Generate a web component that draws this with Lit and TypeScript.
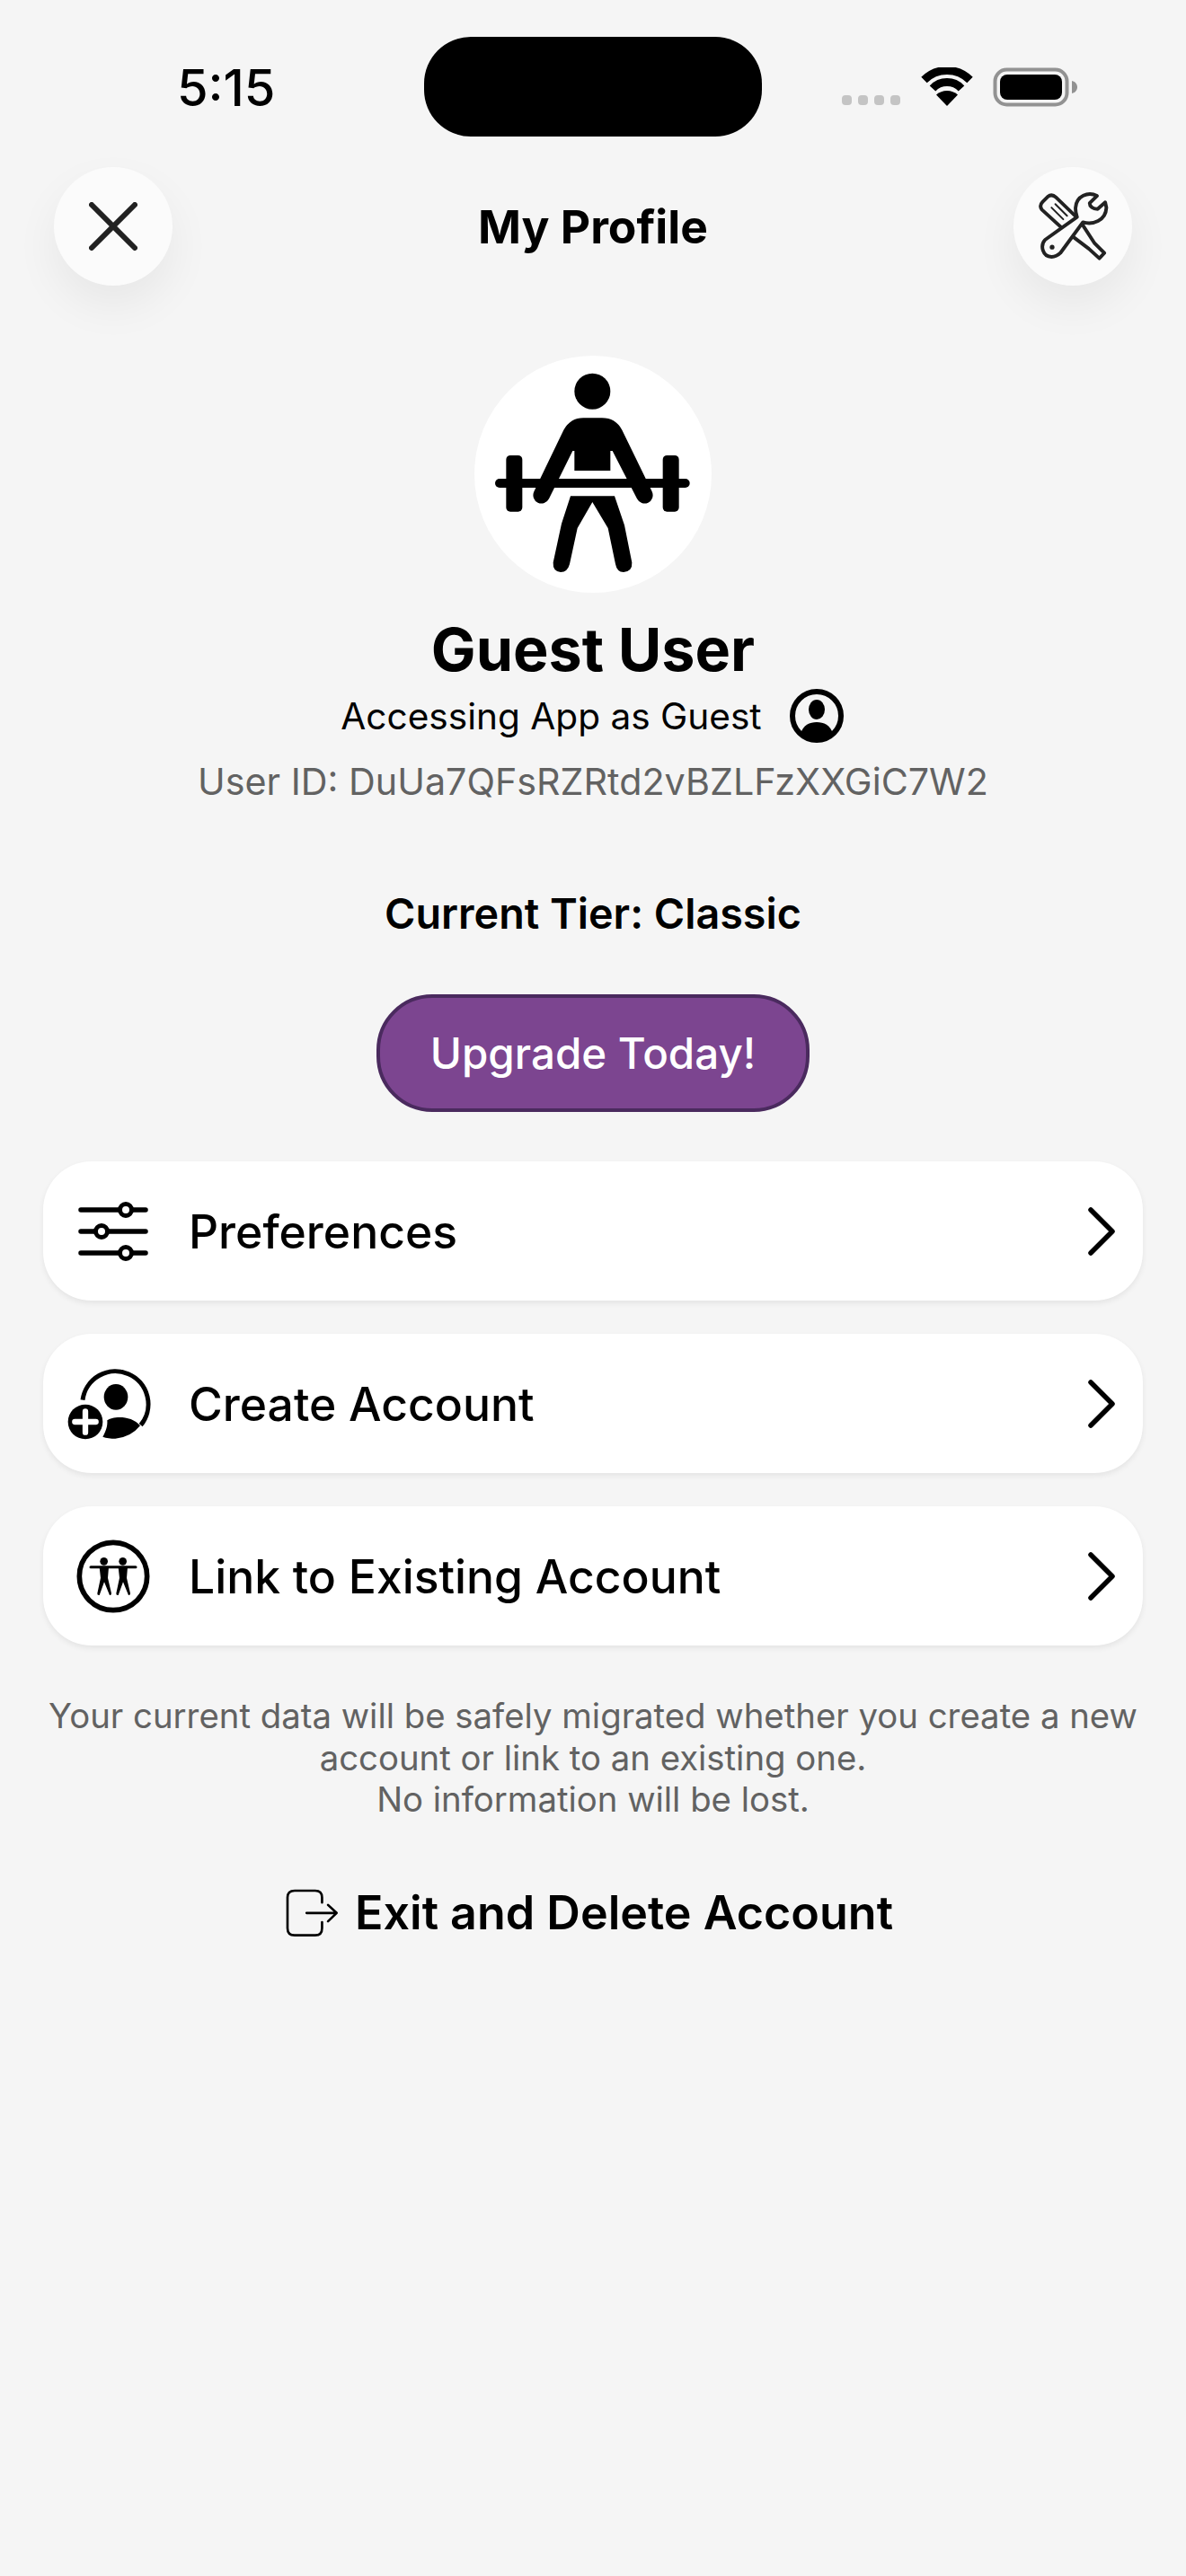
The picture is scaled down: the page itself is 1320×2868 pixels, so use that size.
import { LitElement, html, css, svg } from 'lit'
import { customElement } from 'lit/decorators.js'

const chevron = html`<svg class="chev" viewBox="0 0 36 56" fill="none" stroke="#000" stroke-width="5.5" stroke-linecap="round" stroke-linejoin="round">
  <path d="M6 4 L30 28 L6 52" />
</svg>`

const sliders = html`<svg class="row-ico" viewBox="0 0 100 100">
  <g stroke="#000" stroke-width="5.5" stroke-linecap="round" fill="none">
    <path d="M14 26 H86 M14 50 H86 M14 74 H86" />
  </g>
  <g fill="#fff" stroke="#000" stroke-width="5">
    <circle cx="64" cy="26" r="6.5" />
    <circle cx="37" cy="50" r="6.5" />
    <circle cx="64" cy="74" r="6.5" />
  </g>
</svg>`

const personAdd = html`<svg class="row-ico" viewBox="48 35 300 300">
  <path d="M96 172 A110 110 0 1 1 290 256" fill="none" stroke="#000" stroke-width="15" />
  <ellipse cx="207" cy="162" rx="40" ry="43" />
  <path d="M178 240 C195 226 260 222 288 258 A117 117 0 0 1 205 301 C190 301 175 299 163 295 C172 280 180 260 178 240Z" />
  <circle cx="105" cy="245" r="58" />
  <path d="M70 245 H140 M105 210 V280" stroke="#fff" stroke-width="19" stroke-linecap="round" />
</svg>`

const figure = (dx: number) => svg`<g transform="translate(${dx} 0)">
  <circle cx="136" cy="117" r="13" />
  <path d="M121 136 H152 L149 172 L161 224 Q161 231 155 230 L137 186 L121 230 Q113 231 114 224 L125 172 Z" />
</g>`

const people = html`<svg class="row-ico" viewBox="17 17 300 300">
  <circle cx="167" cy="167" r="113" fill="none" stroke="#000" stroke-width="17" />
  ${figure(0)}${figure(63)}
  <path d="M92 136 L242 136" stroke="#000" stroke-width="9" stroke-linecap="round" />
</svg>`

const exitIcon = html`<svg class="exit-ico" viewBox="110 60 190 175" fill="none" stroke="#000" stroke-width="8" stroke-linecap="round" stroke-linejoin="round">
  <path d="M238 112 V95 Q238 72 215 72 H146 Q122 72 122 95 V198 Q122 222 146 222 H215 Q238 222 238 198 V178" />
  <path d="M186 147 H286 M258 120 L287 147 L258 175" />
</svg>`

const tools = html`<svg class="tools" viewBox="155 138 245 235" fill="none" stroke="#222" stroke-width="12" stroke-linejoin="round" stroke-linecap="round">
  <path d="M172 197 Q162 183 175 170 L192 153 Q206 142 220 155 L300 232 L352 312 L385 345 L368 363 L332 330 L250 268 Z" />
  <path d="M205 190 L245 230 M218 178 L258 218" stroke-width="6" />
  <path fill="#fbfbfb" d="M360 150 C330 135 290 150 287 190 C286 205 290 215 292 222 L183 300 C165 320 175 358 205 358 C220 358 228 352 235 345 L312 240 C345 250 390 235 392 190 L388 172 L362 195 C345 195 335 185 335 175 Z" />
  <circle cx="207" cy="325" r="8" fill="#222" stroke="none" />
</svg>`

const lifter = html`<svg class="lifter" viewBox="24 24 792 792">
  <circle cx="418" cy="143" r="60" />
  <path d="M388 232 H450 Q495 232 517 272 L617 478 A27 27 0 0 1 567 502 L485 342 L478 342 V408 H358 V342 L352 342 L273 502 A27 27 0 0 1 223 478 L322 272 Q345 232 388 232 Z" />
  <rect x="93" y="435" width="650" height="30" rx="15" />
  <rect x="130" y="357" width="54" height="188" rx="14" />
  <rect x="653" y="357" width="54" height="188" rx="14" />
  <path d="M345 493 H492 L525 590 L550 715 Q552 745 522 747 Q500 747 495 720 L470 600 L418 513 L368 600 L342 720 Q335 747 312 747 Q285 745 287 715 L315 585 Z" />
</svg>`

@customElement('app-root')
export class AppRoot extends LitElement {
  static styles = css`
    :host {
      display: block;
      width: 1320px;
      height: 2868px;
      background: #f5f5f5;
      color: #000;
      font-family: Inter, 'Liberation Sans', sans-serif;
      overflow: hidden;
    }
    .status {
      height: 186px;
      display: grid;
      grid-template-columns: 472px 376px 1fr;
      box-sizing: border-box;
      padding-top: 41px;
    }
    .time {
      font-size: 56px;
      font-weight: 500;
      line-height: 115px;
      height: 111px;
      padding-left: 197px;
    }
    .island {
      height: 111px;
      background: #000;
      border-radius: 52px;
    }
    .sys {
      height: 111px;
      display: flex;
      align-items: flex-start;
      padding: 34px 0 0 89px;
    }
    .dots {
      display: flex;
      gap: 7px;
      margin-top: 31px;
    }
    .dots i {
      width: 11px;
      height: 11px;
      background: #c4c4c4;
      border-radius: 4px;
    }
    .wifi {
      width: 58px;
      height: 43px;
      margin-left: 23px;
    }
    .battery {
      width: 94px;
      height: 44px;
      margin-left: 22px;
    }
    .head {
      display: flex;
      justify-content: space-between;
      align-items: center;
      padding: 0 60px;
      height: 132px;
    }
    .fab {
      width: 132px;
      height: 132px;
      border-radius: 50%;
      background: #fbfbfb;
      box-shadow: 0 22px 50px rgba(0, 0, 0, 0.06);
      display: flex;
      align-items: center;
      justify-content: center;
    }
    .x {
      width: 54px;
      height: 54px;
    }
    .tools {
      width: 80px;
      height: 77px;
    }
    .title {
      font-size: 51.5px;
      font-weight: 700;
      line-height: 60px;
    }
    .profile {
      display: flex;
      flex-direction: column;
      align-items: center;
    }
    .avatar {
      width: 264px;
      height: 264px;
      margin-top: 78px;
      border-radius: 50%;
      background: #fff;
    }
    .lifter {
      display: block;
      width: 264px;
      height: 264px;
    }
    .name {
      margin-top: 27px;
      font-size: 66.4px;
      font-weight: 700;
      line-height: 72px;
    }
    .guest {
      margin-top: 8px;
      display: flex;
      align-items: center;
      height: 60px;
      gap: 31px;
      font-size: 40.6px;
      font-weight: 400;
      padding-right: 2px;
    }
    .guest svg {
      width: 60px;
      height: 60px;
    }
    .uid {
      margin-top: 19px;
      font-size: 41.25px;
      line-height: 48px;
      color: #626262;
    }
    .tier {
      margin-top: 99px;
      font-size: 46.7px;
      font-weight: 600;
      line-height: 48px;
    }
    .upgrade {
      margin-top: 66px;
      box-sizing: border-box;
      width: 482px;
      height: 131px;
      border-radius: 62px;
      background: #7c4590;
      border: 4px solid #4a2a5e;
      color: #fff;
      font-size: 47.5px;
      font-weight: 500;
      display: flex;
      align-items: center;
      justify-content: center;
    }
    .rows {
      margin: 55px 48px 0;
      display: flex;
      flex-direction: column;
      gap: 37px;
    }
    .row {
      height: 155px;
      background: #fff;
      border-radius: 54px;
      box-shadow: 0 3px 6px rgba(0, 0, 0, 0.07);
      display: flex;
      align-items: center;
      padding: 0 28px 0 28px;
      font-size: 51.6px;
      font-weight: 500;
    }
    .row-ico {
      width: 100px;
      height: 100px;
      margin-right: 34px;
      flex: none;
      overflow: visible;
    }
    .row span {
      flex: 1;
    }
    .chev {
      width: 36px;
      height: 56px;
    }
    .note {
      margin: 55px 40px 0;
      text-align: center;
      font-size: 38.35px;
      line-height: 46.5px;
      color: #626262;
    }
    .exit {
      margin-top: 71px;
      display: flex;
      align-items: center;
      justify-content: center;
      gap: 16px;
      font-size: 52px;
      font-weight: 600;
      height: 64px;
      padding-right: 10px;
    }
    .exit-ico {
      width: 63px;
      height: 58px;
    }
  `

  render() {
    return html`
      <div class="status">
        <div class="time">5:15</div>
        <div class="island"></div>
        <div class="sys">
          <div class="dots"><i></i><i></i><i></i><i></i></div>
          <svg class="wifi" viewBox="0 0 58 43" fill="none" stroke="#000" stroke-width="9">
            <path d="M3.5 14 A36 36 0 0 1 54.5 14" />
            <path d="M13 23.5 A22 22 0 0 1 45 23.5" />
            <path d="M17 30.5 A18 18 0 0 1 41 30.5 L29 43 Z" fill="#000" stroke="none" />
          </svg>
          <svg class="battery" viewBox="0 0 94 44">
            <rect x="2.5" y="2.5" width="80" height="39" rx="13" fill="none" stroke="#929292" stroke-width="4" />
            <rect x="8" y="8" width="69" height="28" rx="8" />
            <path d="M88 15 C92 16 94 19 94 22 C94 25 92 28 88 29 Z" fill="#929292" />
          </svg>
        </div>
      </div>

      <div class="head">
        <div class="fab">
          <svg class="x" viewBox="0 0 54 54" stroke="#222" stroke-width="6" stroke-linecap="round">
            <path d="M3 3 L51 51 M51 3 L3 51" />
          </svg>
        </div>
        <div class="title">My Profile</div>
        <div class="fab">${tools}</div>
      </div>

      <div class="profile">
        <div class="avatar">${lifter}</div>
        <div class="name">Guest User</div>
        <div class="guest">
          Accessing App as Guest
          <svg viewBox="0 0 60 60">
            <circle cx="30" cy="30" r="27" fill="none" stroke="#000" stroke-width="6" />
            <ellipse cx="30" cy="23" rx="9" ry="11" />
            <path d="M12 50 C15 40 22 37 30 37 C38 37 45 40 48 50 C43 56 36 58 30 58 C24 58 17 56 12 50 Z" />
          </svg>
        </div>
        <div class="uid">User ID: DuUa7QFsRZRtd2vBZLFzXXGiC7W2</div>
        <div class="tier">Current Tier: Classic</div>
        <div class="upgrade">Upgrade Today!</div>
      </div>

      <div class="rows">
        <div class="row">${sliders}<span>Preferences</span>${chevron}</div>
        <div class="row">${personAdd}<span>Create Account</span>${chevron}</div>
        <div class="row">${people}<span>Link to Existing Account</span>${chevron}</div>
      </div>

      <div class="note">
        Your current data will be safely migrated whether you create a new<br />
        account or link to an existing one.<br />
        No information will be lost.
      </div>

      <div class="exit">${exitIcon}<span>Exit and Delete Account</span></div>
    `
  }
}

declare global {
  interface HTMLElementTagNameMap {
    'app-root': AppRoot
  }
}
